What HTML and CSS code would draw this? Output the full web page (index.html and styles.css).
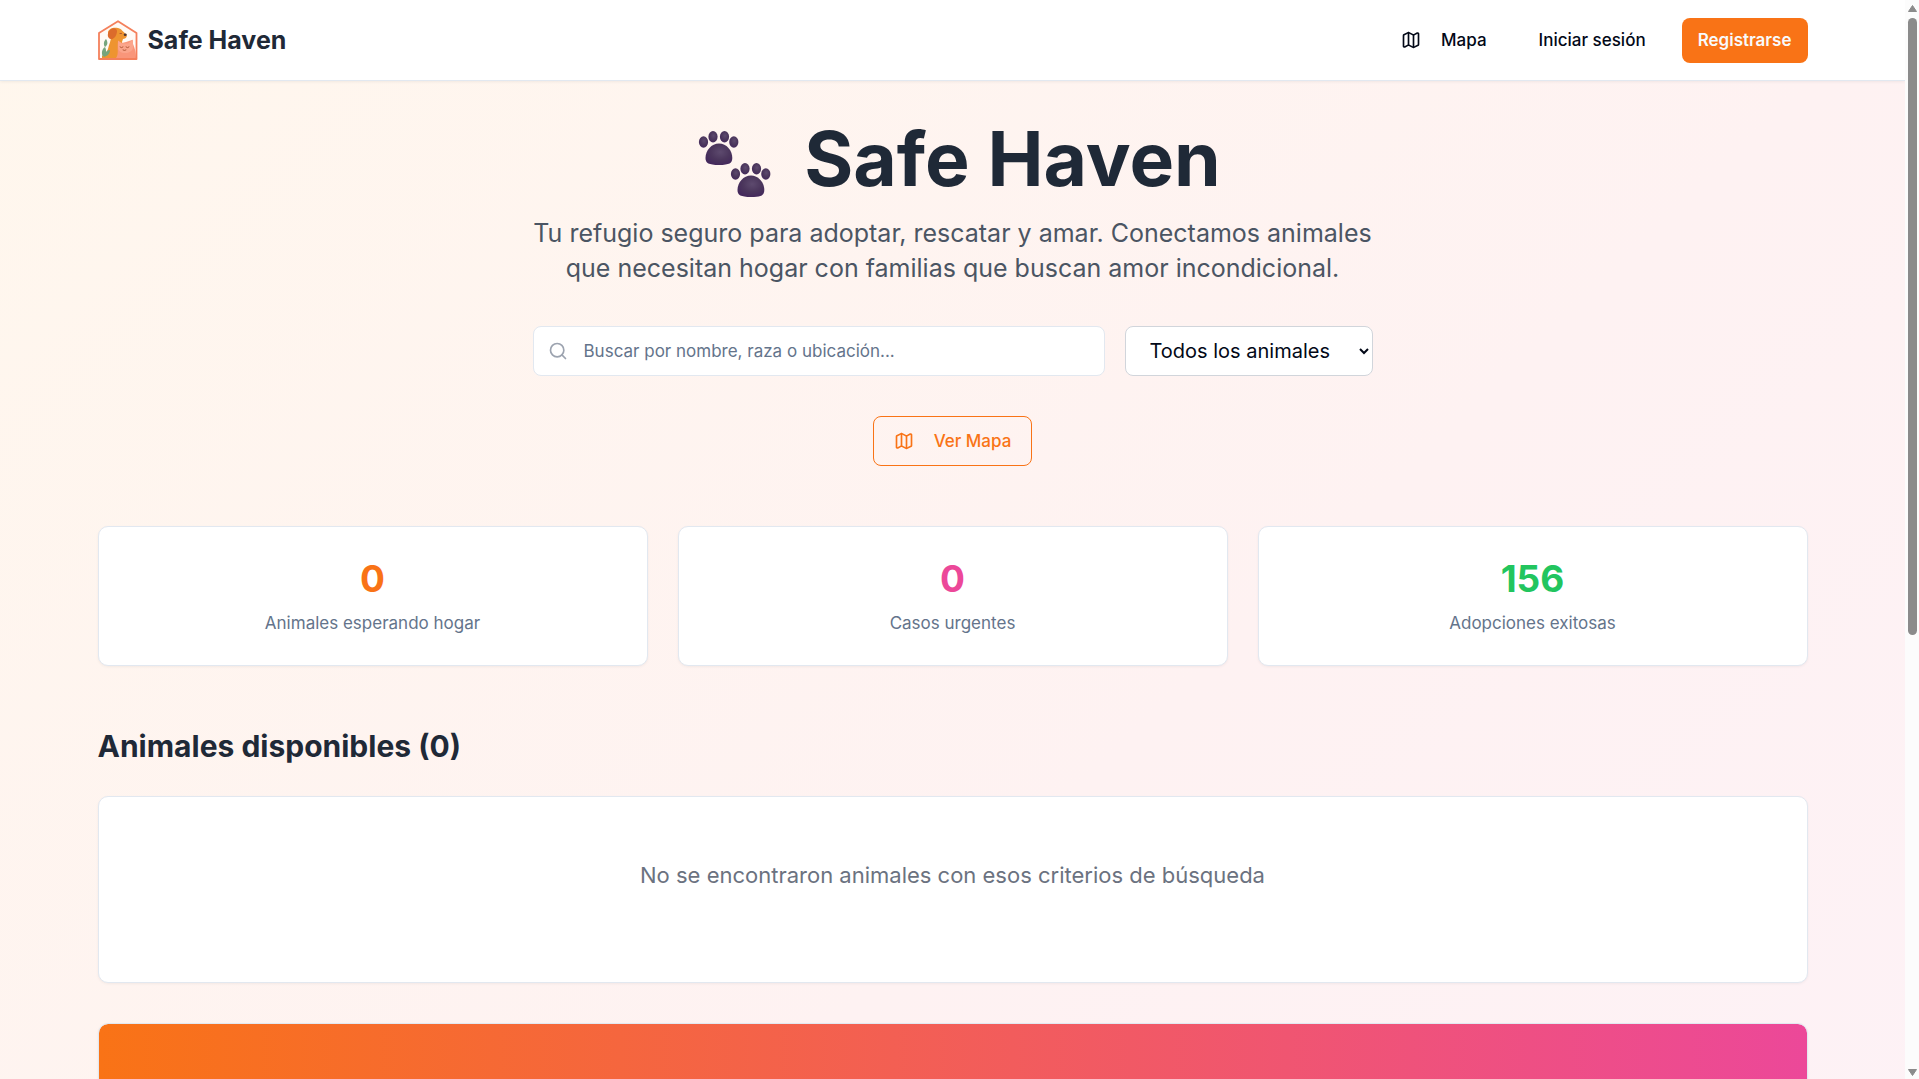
FILE: index.html
```html
<!DOCTYPE html>
<html lang="es">
<head>
<meta charset="utf-8">
<meta name="viewport" content="width=device-width, initial-scale=1">
<title>Safe Haven</title>
<link rel="stylesheet" href="styles.css">
</head>
<body class="shell">
<svg class="defs" width="0" height="0" aria-hidden="true">
  <defs>
    <radialGradient id="paw-fill" cx="0.55" cy="0.4" r="0.65">
      <stop offset="0" stop-color="#5d4a6e"/>
      <stop offset="0.55" stop-color="#4b365c"/>
      <stop offset="1" stop-color="#43275c"/>
    </radialGradient>
    <symbol id="map" viewBox="0 0 24 24">
      <path d="M14.106 5.553a2 2 0 0 0 1.788 0l3.659-1.83A1 1 0 0 1 21 4.619v12.764a1 1 0 0 1-.553.894l-4.553 2.277a2 2 0 0 1-1.788 0l-4.212-2.106a2 2 0 0 0-1.788 0l-3.659 1.83A1 1 0 0 1 3 19.381V6.618a1 1 0 0 1 .553-.894l4.553-2.277a2 2 0 0 1 1.788 0z"/>
      <path d="M15 5.764v15"/><path d="M9 3.236v15"/>
    </symbol>
    <symbol id="paw" viewBox="0 0 40 34" overflow="visible">
      <g fill="url(#paw-fill)">
        <ellipse cx="5" cy="11" rx="4.6" ry="5.7"/>
        <ellipse cx="14.5" cy="5.8" rx="4.6" ry="5.7"/>
        <ellipse cx="26" cy="5.8" rx="4.6" ry="5.7"/>
        <ellipse cx="35.3" cy="11" rx="4.6" ry="5.7"/>
        <path d="M20.500 12.500C13 12.500 7 19.500 7 27C7 32 10 34 20.500 34C31 34 33.800 32 33.800 27C33.800 19.500 28 12.500 20.500 12.500Z"/>
      </g>
    </symbol>
  </defs>
</svg>
<div class="page">
  <div class="content">
    <header class="header">
      <div class="container header-row">
        <a class="brand" href="#">
          <svg class="logo" viewBox="0 0 40 40" aria-hidden="true">
            <path d="M1 13 20 1.200 39 13V39H1Z" fill="#fffaf5"/>
            <path d="M4 38V36C7 34 9 32 10 29C11 24 13 21 13 17C11 18 10 15 10 12C11 8 16 7 20 8C24 9 25 12 28 14C30 16 28 19 25 19L24 22L29 38Z" fill="#ee9430"/>
            <path d="M12 10C15 7 19 8 19 11C19 15 16 20 12.500 19C9 18 9 13 12 10Z" fill="#dc6b2b"/>
            <path d="M18 38C21 34 19 29 20 21L24 23L28 22L34 20C35 26 38 28 38 38Z" fill="#f9967a"/>
            <path d="M20 20.500 24 23.500H30L35 19.500V27C35 31 31 33 27 33C23 33 20 31 20 27Z" fill="#fba58b"/>
            <path d="M22 27q1.500 1.500 3 0M28 27q1.500 1.500 3 0M25 30q1.500 1 3 0M22 13.500h1.500" fill="none" stroke="#a9502f" stroke-width="0.900" stroke-linecap="round"/>
            <ellipse cx="27.200" cy="14.800" rx="1.500" ry="1.200" fill="#4d3430"/>
            <path d="M5 37C3 33 4 29 7 27C9 31 8 34 5 37ZM7 27C5 24 6 21 8 19C10 22 10 25 7 27ZM6 37C6 33 9 30 12 30C12 34 9 36 6 37Z" fill="#77a57c"/>
            <path d="M1 13 20 1.200 38.500 13V39H1Z" fill="none" stroke="#f4805c" stroke-width="1.800" stroke-linejoin="round"/>
          </svg>
          <span>Safe Haven</span>
        </a>
        <nav class="nav" aria-label="Principal">
          <a class="nav-link" href="#"><svg class="icon" aria-hidden="true"><use href="#map"/></svg>Mapa</a>
          <a class="nav-link" href="#">Iniciar sesión</a>
          <button class="nav-link register" type="button">Registrarse</button>
        </nav>
      </div>
    </header>
    <main class="container main">
      <section class="hero">
        <h1 class="title">
          <svg class="paws" viewBox="0 0 100 75" aria-hidden="true">
            <use href="#paw" x="14.500" y="10" width="40" height="34"/>
            <use href="#paw" x="46.500" y="42" width="40" height="34"/>
          </svg>
          <span>Safe Haven</span>
        </h1>
        <p class="lead">Tu refugio seguro para adoptar, rescatar y amar. Conectamos animales que necesitan hogar con familias que buscan amor incondicional.</p>
        <form class="search">
          <label class="field">
            <svg class="icon search-icon" viewBox="0 0 24 24" aria-hidden="true"><circle cx="11" cy="11" r="8"/><path d="m21 21-4.300-4.300"/></svg>
            <input class="search-input" type="text" aria-label="Buscar animales" placeholder="Buscar por nombre, raza o ubicación...">
          </label>
          <select class="filter" aria-label="Tipo de animal"><option>Todos los animales</option></select>
        </form>
        <button class="map-button" type="button"><svg class="icon" aria-hidden="true"><use href="#map"/></svg>Ver Mapa</button>
      </section>
      <section class="stats">
        <div class="card stat"><strong class="value orange">0</strong><span class="label">Animales esperando hogar</span></div>
        <div class="card stat"><strong class="value pink">0</strong><span class="label">Casos urgentes</span></div>
        <div class="card stat"><strong class="value green">156</strong><span class="label">Adopciones exitosas</span></div>
      </section>
      <section class="available">
        <h2 class="heading">Animales disponibles (0)</h2>
        <div class="card empty"><p class="empty-text">No se encontraron animales con esos criterios de búsqueda</p></div>
      </section>
      <section class="card banner"></section>
    </main>
  </div>
</div>
<div class="scrollbar" aria-hidden="true">
  <svg class="arrow" viewBox="0 0 9 7"><path d="M4.500 0.500 8.500 6.500H0.500Z"/></svg>
  <div class="track"><div class="thumb"></div></div>
  <svg class="arrow" viewBox="0 0 9 7"><path d="M4.500 6.500 8.500 0.500H0.500Z"/></svg>
</div>
</body>
</html>
```
FILE: styles.css
```css
*, *::before, *::after { box-sizing: border-box; }

body, h1, h2, p { margin: 0; }

button, input, select { font: inherit; margin: 0; }

.defs { position: absolute; }

.shell {
  display: flex;
  height: 100vh;
  overflow: hidden;
  font-family: Inter, "Liberation Sans", sans-serif;
  font-size: 17px;
  color: #020817;
}

.page {
  flex: 1;
  min-width: 0;
  height: 100vh;
  overflow: hidden;
}

.content {
  min-height: 170vh;
  background: linear-gradient(to bottom right, #fff7ed, #fef2f2, #fdf2f8);
}

.container {
  width: 100%;
  max-width: 1750px;
  margin: 0 auto;
  padding: 0 20px;
}

/* Header */
.header {
  background: #fff;
  border-bottom: 1px solid #e2e8f0;
  box-shadow: 0 1px 3px rgba(0, 0, 0, 0.06);
}

.header-row {
  display: flex;
  align-items: center;
  justify-content: space-between;
  height: 80px;
}

.brand {
  display: flex;
  align-items: center;
  gap: 10px;
  font-size: 25px;
  font-weight: 700;
  color: #1f2937;
  text-decoration: none;
}

.logo { width: 40px; height: 40px; }

.nav { display: flex; gap: 20px; }

.nav-link {
  display: flex;
  align-items: center;
  gap: 20px;
  height: 45px;
  padding: 0 16px;
  border: 0;
  border-radius: 8px;
  font-weight: 500;
  color: inherit;
  text-decoration: none;
}

.register { background: #f97316; font-weight: 600; color: #f8fafc; }

.icon {
  width: 20px;
  height: 20px;
  fill: none;
  stroke: currentColor;
  stroke-width: 2;
  stroke-linecap: round;
  stroke-linejoin: round;
}

/* Main */
.main {
  padding-top: 40px;
  padding-bottom: 40px;
}

.hero {
  display: flex;
  flex-direction: column;
  align-items: center;
  margin-bottom: 60px;
}

.title {
  display: flex;
  gap: 20px;
  margin-bottom: 20px;
  font-size: 75px;
  line-height: 75px;
  font-weight: 700;
  color: #1f2937;
}

.paws { width: 100px; height: 75px; overflow: visible; }

.lead {
  max-width: 840px;
  margin-bottom: 40px;
  font-size: 25px;
  line-height: 35px;
  text-align: center;
  color: #4b5563;
}

.search {
  display: flex;
  gap: 20px;
  width: 100%;
  max-width: 840px;
  margin-bottom: 40px;
}

.field {
  flex: 1;
  display: flex;
  align-items: center;
  gap: 16px;
  height: 50px;
  padding: 0 14px;
  background: #fff;
  border: 1px solid #e2e8f0;
  border-radius: 8px;
}

.search-icon { color: #9ca3af; }

.search-input {
  flex: 1;
  min-width: 0;
  padding: 0;
  border: 0;
  outline: 0;
  background: transparent;
}

.search-input::placeholder { color: #64748b; opacity: 1; }

.filter {
  width: 248px;
  height: 50px;
  padding: 0 20px;
  background-color: #fff;
  border: 1px solid #d1d5db;
  border-radius: 8px;
  font-size: 20px;
  color: #020817;
}

.map-button {
  display: flex;
  align-items: center;
  gap: 20px;
  height: 50px;
  padding: 0 20px;
  background: transparent;
  border: 1px solid #f97316;
  border-radius: 8px;
  font-weight: 500;
  color: #f97316;
}

.card {
  background: #fff;
  border: 1px solid #e2e8f0;
  border-radius: 10px;
  box-shadow: 0 1px 3px rgba(0, 0, 0, 0.05);
}

.stats {
  display: grid;
  grid-template-columns: repeat(3, 1fr);
  gap: 30px;
  margin-bottom: 60px;
}

.stat {
  display: flex;
  flex-direction: column;
  align-items: center;
  gap: 10px;
  padding: 30px;
}

.value { font-size: 37px; line-height: 44px; font-weight: 700; }
.orange { color: #f97316; }
.pink { color: #ec4899; }
.green { color: #22c55e; }

.label { line-height: 24px; color: #64748b; }

.heading {
  margin-bottom: 30px;
  font-size: 30px;
  line-height: 40px;
  font-weight: 700;
  color: #1f2937;
}

.empty {
  min-height: 187px;
  margin-bottom: 40px;
  padding: 60px 30px;
  text-align: center;
}

.empty-text { font-size: 22px; line-height: 36px; color: #6b7280; }

.banner {
  min-height: 340px;
  background: linear-gradient(to right, #f97316, #ec4899);
  background-clip: padding-box;
}

/* Scrollbar */
.scrollbar {
  display: flex;
  flex-direction: column;
  align-items: center;
  gap: 6px;
  width: 14px;
  padding: 5px 0 3px;
  background: #fcfcfc;
}

.arrow { width: 9px; height: 7px; fill: #8b8b8b; stroke: #8b8b8b; stroke-linejoin: round; }

.track { flex: 1; }

.thumb {
  width: 9px;
  height: 59%;
  border-radius: 5px;
  background: #8b8b8b;
}
```
